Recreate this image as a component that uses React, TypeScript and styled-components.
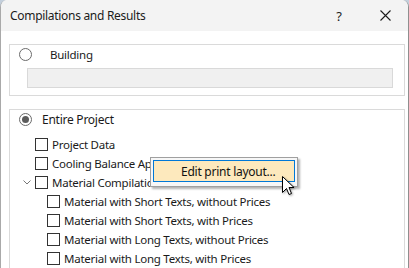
import React from "react";
import styled, { createGlobalStyle } from "styled-components";

const GlobalStyle = createGlobalStyle`
  html, body {
    margin: 0;
    padding: 0;
    background: #c3cfdc;
  }
  body {
    font-family: "Noto Sans", "Open Sans", sans-serif;
  }
`;

const Window = styled.div`
  position: relative;
  width: 407px;
  height: 268px;
  overflow: hidden;
  background: #ffffff;
  border-left: 1px solid #a9a9a9;
  border-right: 1px solid #8f8f8f;
  border-radius: 7px 7px 0 0;
  font-size: 11.5px;
  letter-spacing: -0.25px;
  color: #1a1a1a;
`;

const TitleBar = styled.div`
  height: 31px;
  display: flex;
  align-items: center;
  background: #f3f3f3;
  padding-left: 9px;
`;

const Title = styled.div`
  flex: 1;
  font-size: 12px;
  color: #1b1b1b;
  letter-spacing: -0.3px;
`;

const TitleButton = styled.div<{ w: number }>`
  width: ${({ w }) => w}px;
  height: 31px;
  display: flex;
  align-items: center;
  justify-content: center;
  font-size: 13px;
  color: #1b1b1b;
`;

const Content = styled.div`
  padding: 13px 3px 0 8px;
  display: flex;
  flex-direction: column;
  gap: 13px;
`;

const GroupBox = styled.div<{ open?: boolean }>`
  border: 1px solid #dadada;
  ${({ open }) => (open ? "border-bottom: none; height: 160px;" : "")}
  padding: 3px 0 7px 9px;
  display: flex;
  flex-direction: column;
`;

const RadioRow = styled.div<{ gap: number; big?: boolean }>`
  display: flex;
  align-items: center;
  gap: ${({ gap }) => gap}px;
  height: 13px;
  margin-bottom: 7px;
  font-size: ${({ big }) => (big ? 12 : 11.5)}px;
`;

const Radio = styled.div<{ checked?: boolean }>`
  width: 11px;
  height: 11px;
  border: 1px solid #6b6b6b;
  border-radius: 50%;
  display: flex;
  align-items: center;
  justify-content: center;
  background: #fff;
  &::after {
    content: "";
    display: ${({ checked }) => (checked ? "block" : "none")};
    width: 7px;
    height: 7px;
    border-radius: 50%;
    background: #5c5c5c;
  }
`;

const Label = styled.span`
  white-space: nowrap;
  line-height: 13px;
`;

const DisabledInput = styled.div`
  margin-left: 8px;
  width: 364px;
  height: 18px;
  border: 1px solid #d9d9d9;
  background: #f0f0f0;
`;

const Tree = styled.div`
  display: flex;
  flex-direction: column;
  margin-top: 2px;
`;

const TreeRow = styled.div<{ level: number }>`
  height: 19px;
  display: flex;
  align-items: center;
  padding-left: ${({ level }) => (level === 1 ? 4 : 16)}px;
`;

const Toggle = styled.div`
  width: 12px;
  height: 13px;
  display: flex;
  align-items: center;
  justify-content: flex-start;
  margin-left: ${() => 0}px;
`;

const CheckBox = styled.div`
  width: 11px;
  height: 11px;
  border: 1px solid #333333;
  background: #fff;
  margin-right: 4px;
  flex-shrink: 0;
`;

const Menu = styled.div`
  position: absolute;
  left: 149px;
  top: 157px;
  width: 142px;
  height: 24px;
  padding: 2px;
  background: #f7f7f7;
  border: 1px solid #a0a0a0;
  box-shadow: 2px 2px 2px rgba(0, 0, 0, 0.3);
`;

const MenuItem = styled.div`
  height: 20px;
  border: 1px solid #0078d7;
  background: #fde9bd;
  display: flex;
  align-items: center;
  padding-left: 27px;
  font-size: 12px;
  color: #111;
`;

const Cursor = styled.svg`
  position: absolute;
  left: 281px;
  top: 176px;
  filter: drop-shadow(1px 1px 1px rgba(0, 0, 0, 0.35));
`;

const items: { level: number; text: string; toggle?: boolean }[] = [
  { level: 1, text: "Project Data" },
  { level: 1, text: "Cooling Balance Appendix" },
  { level: 1, text: "Material Compilation", toggle: true },
  { level: 2, text: "Material with Short Texts, without Prices" },
  { level: 2, text: "Material with Short Texts, with Prices" },
  { level: 2, text: "Material with Long Texts, without Prices" },
  { level: 2, text: "Material with Long Texts, with Prices" },
];

const App: React.FC = () => {
  return (
    <>
      <GlobalStyle />
      <Window>
        <TitleBar>
          <Title>Compilations and Results</Title>
          <TitleButton w={46}>?</TitleButton>
          <TitleButton w={46}>
            <svg width="11" height="11" viewBox="0 0 11 11">
              <path d="M0.5 0.5 L10.5 10.5 M10.5 0.5 L0.5 10.5" stroke="#1b1b1b" strokeWidth="1.1" />
            </svg>
          </TitleButton>
        </TitleBar>
        <Content>
          <GroupBox>
            <RadioRow gap={18}>
              <Radio />
              <Label>Building</Label>
            </RadioRow>
            <DisabledInput />
          </GroupBox>
          <GroupBox open>
            <RadioRow gap={10} big>
              <Radio checked />
              <Label>Entire Project</Label>
            </RadioRow>
            <Tree>
              {items.map((it) => (
                <TreeRow key={it.text} level={it.level}>
                  <Toggle>
                    {it.toggle && (
                      <svg width="8" height="5" viewBox="0 0 8 5">
                        <path d="M0.5 0.5 L4 4 L7.5 0.5" stroke="#777" fill="none" strokeWidth="1" />
                      </svg>
                    )}
                  </Toggle>
                  <CheckBox />
                  <Label>{it.text}</Label>
                </TreeRow>
              ))}
            </Tree>
          </GroupBox>
        </Content>
        <Menu>
          <MenuItem>Edit print layout...</MenuItem>
        </Menu>
        <Cursor width="13" height="21" viewBox="0 0 13 21">
          <path
            d="M0.5 0.5 L0.5 16.5 L4.5 12.5 L7 18.5 L9.5 17.5 L7 11.5 L12 11.5 Z"
            fill="#fff"
            stroke="#000"
            strokeWidth="1"
            strokeLinejoin="miter"
          />
        </Cursor>
      </Window>
    </>
  );
};

export default App;
